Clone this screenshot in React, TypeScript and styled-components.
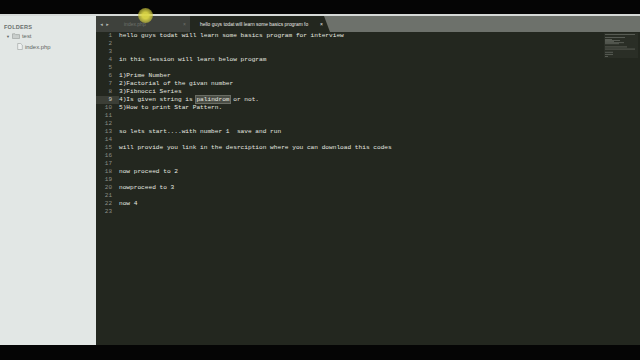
import React from "react";
import styled, { createGlobalStyle } from "styled-components";

const Global = createGlobalStyle`
  html, body { margin: 0; padding: 0; background: #050505; }
  body { width: 640px; height: 360px; overflow: hidden; }
`;

const Screen = styled.div`
  position: relative;
  width: 640px;
  height: 360px;
  display: flex;
  flex-direction: column;
  background: #050505;
`;

const BlackBar = styled.div<{ $h: number }>`
  height: ${(p) => p.$h}px;
  background: #050505;
  flex: none;
`;

const Edge = styled.div`
  height: 2px;
  background: #d6dad8;
  flex: none;
`;

const Main = styled.div`
  flex: 1;
  display: flex;
  min-height: 0;
`;

const Sidebar = styled.div`
  width: 96px;
  flex: none;
  background: #e2e7e5;
  padding: 8px 0 0 4px;
  box-sizing: border-box;
  font-family: "Liberation Sans", Arial, sans-serif;
  color: #5d6261;
`;

const SideTitle = styled.div`
  font-size: 5.6px;
  font-weight: bold;
  letter-spacing: 0.2px;
  line-height: 7px;
  color: #6a6f6d;
`;

const TreeRow = styled.div<{ $indent: number }>`
  display: flex;
  align-items: center;
  gap: 2px;
  height: 10.5px;
  padding-left: ${(p) => p.$indent}px;
  font-size: 5.9px;
  color: #5f6563;
`;

const Editor = styled.div`
  flex: 1;
  display: flex;
  flex-direction: column;
  background: #23271f;
  min-width: 0;
`;

const TabBar = styled.div`
  height: 16px;
  flex: none;
  display: flex;
  background: #6d716b;
`;

const TabLeft = styled.div`
  display: flex;
  align-items: center;
  width: 98px;
  background: #3e413c;
  flex: none;
`;

const Arrows = styled.div`
  width: 18px;
  font-size: 5px;
  color: #b7bab4;
  text-align: center;
  font-family: "DejaVu Sans", sans-serif;
  letter-spacing: 1px;
`;

const InactiveTab = styled.div`
  flex: 1;
  display: flex;
  align-items: center;
  justify-content: space-between;
  padding: 0 8px 0 10px;
  font-family: "Liberation Sans", Arial, sans-serif;
  font-size: 5px;
  color: #6f726c;
`;

const ActiveTab = styled.div`
  width: 140px;
  margin-left: -4px;
  display: flex;
  align-items: center;
  justify-content: space-between;
  padding: 0 7px 0 10px;
  box-sizing: border-box;
  background: #23271f;
  clip-path: polygon(0 0, calc(100% - 6px) 0, 100% 100%, 0 100%);
  font-family: "Liberation Sans", Arial, sans-serif;
  font-size: 4.9px;
  color: #e9ebe6;
  white-space: nowrap;
  overflow: hidden;
`;

const Close = styled.span`
  font-size: 5px;
  color: inherit;
  margin-left: 3px;
`;

const Body = styled.div`
  flex: 1;
  display: flex;
  min-height: 0;
`;

const Gutter = styled.div`
  width: 23px;
  flex: none;
  font-family: "Liberation Mono", monospace;
  font-size: 6px;
  line-height: 8px;
  color: #8b8d86;
`;

const Num = styled.div<{ $current?: boolean }>`
  height: 8px;
  padding-right: 7px;
  text-align: right;
  background: ${(p) => (p.$current ? "#3b3e36" : "transparent")};
  color: ${(p) => (p.$current ? "#c9cbc4" : "#8b8d86")};
`;

const Code = styled.div`
  flex: 1;
  min-width: 0;
  font-family: "Liberation Mono", monospace;
  font-size: 6.15px;
  line-height: 8px;
  color: #e6e7e0;
  white-space: pre;
`;

const Line = styled.div`
  height: 8px;
`;

const Sel = styled.span`
  background: #4a4d45;
  outline: 0.5px solid #6a6d64;
`;

const Minimap = styled.div`
  width: 36px;
  flex: none;
  padding-top: 1px;
`;

const Cursor = styled.div`
  position: absolute;
  left: 138px;
  top: 8px;
  width: 15px;
  height: 15px;
  border-radius: 50%;
  background: radial-gradient(circle, rgba(220, 215, 70, 0.95) 30%, rgba(200, 195, 60, 0.6) 70%, rgba(200, 195, 60, 0) 100%);
`;

const lines: React.ReactNode[] = [
  "hello guys todat will learn some basics program for interview",
  "",
  "",
  "in this lession will learn below program",
  "",
  "1)Prime Number",
  "2)Factorial of the givan number",
  "3)Fibnocci Series",
  <>4)Is given string is <Sel>palindrom</Sel> or not.</>,
  "5)How to print Star Pattern.",
  "",
  "",
  "so lets start....with number 1  save and run",
  "",
  "will provide you link in the desrciption where you can download this codes",
  "",
  "",
  "now proceed to 2",
  "",
  "nowproceed to 3",
  "",
  "now 4",
  "",
];

const FolderIcon = () => (
  <svg width="8" height="6" viewBox="0 0 8 6">
    <path d="M0.5 0.8h2.5l0.8 0.8h3.7v3.9h-7z" fill="#c9cecc" stroke="#8a908e" strokeWidth="0.5" />
  </svg>
);

const FileIcon = () => (
  <svg width="6" height="7" viewBox="0 0 6 7">
    <path d="M0.7 0.5h3l1.6 1.6v4.4h-4.6z" fill="#eef1f0" stroke="#8a908e" strokeWidth="0.5" />
  </svg>
);

const MiniMapDrawing = () => {
  const widths = [30, 0, 0, 20, 0, 7, 15, 9, 19, 14, 0, 0, 22, 0, 30, 0, 0, 8, 0, 8, 0, 3];
  return (
    <svg width="34" height="25" viewBox="0 0 34 25">
      <rect x="0" y="0" width="34" height="25" fill="#2a2e26" />
      {widths.map((w, i) =>
        w ? <rect key={i} x="1" y={1 + i * 1.05} width={w} height="0.7" fill="#6c6f68" /> : null
      )}
    </svg>
  );
};

export default function App() {
  return (
    <>
      <Global />
      <Screen>
        <BlackBar $h={14} />
        <Edge />
        <Main>
          <Sidebar>
            <SideTitle>FOLDERS</SideTitle>
            <TreeRow $indent={2}>
              <span style={{ fontSize: "4px" }}>▼</span>
              <FolderIcon />
              <span>test</span>
            </TreeRow>
            <TreeRow $indent={13}>
              <FileIcon />
              <span>index.php</span>
            </TreeRow>
          </Sidebar>
          <Editor>
            <TabBar>
              <TabLeft>
                <Arrows>◂ ▸</Arrows>
                <InactiveTab>
                  <span>index.php</span>
                  <Close>×</Close>
                </InactiveTab>
              </TabLeft>
              <ActiveTab>
                <span>hello guys todat will learn some basics program fo</span>
                <Close>×</Close>
              </ActiveTab>
            </TabBar>
            <Body>
              <Gutter>
                {lines.map((_, i) => (
                  <Num key={i} $current={i === 8}>{i + 1}</Num>
                ))}
              </Gutter>
              <Code>
                {lines.map((l, i) => (
                  <Line key={i}>{l}</Line>
                ))}
              </Code>
              <Minimap>
                <MiniMapDrawing />
              </Minimap>
            </Body>
          </Editor>
        </Main>
        <BlackBar $h={15} />
        <Cursor />
      </Screen>
    </>
  );
}
